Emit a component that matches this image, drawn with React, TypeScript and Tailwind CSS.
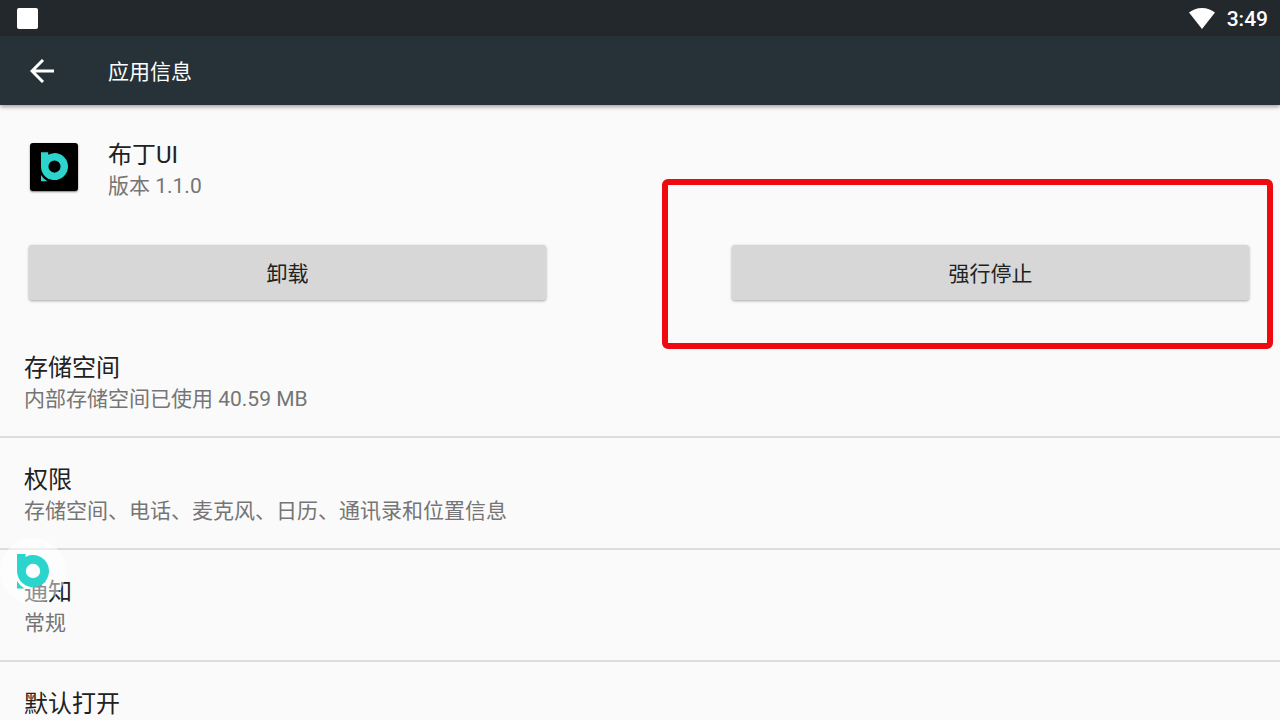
import React from 'react';

interface SettingItem {
    id: number;
    title: string;
    summary?: string;
}

const BrandMark: React.FC<{ className?: string }> = ({ className = '' }) => {
    return (
        <svg viewBox="0 0 32 35" className={className} fill="#2bd4cd" aria-hidden="true">
            <path
                fillRule="evenodd"
                d="M0 0H8.5V2.9A16 16 0 1 1 0 17ZM16 9.8A7.2 7.2 0 1 0 16 24.2A7.2 7.2 0 1 0 16 9.8Z"
            />
            <path d="M0 27Q2.4 31.4 7.5 34.5H0Z" />
        </svg>
    );
};

const StatusBar: React.FC = () => {
    return (
        <div className="flex h-9 items-center justify-between bg-[#23282c] pl-[17px] pr-3 text-white">
            <span className="size-[21px] rounded-[2px] bg-white" />
            <div className="flex items-center gap-3">
                <svg viewBox="0 0 26 21" className="h-[21px] w-[26px]" fill="currentColor" aria-hidden="true">
                    <path d="M13 21 0 4.6C3.6 1.7 8 0 13 0s9.4 1.7 13 4.6Z" />
                </svg>
                <span className="pt-0.5 text-[21px] font-medium leading-6">3:49</span>
            </div>
        </div>
    );
};

const AppBar: React.FC = () => {
    return (
        <header className="relative flex h-[69px] items-center gap-[54px] bg-[#273238] pl-[30px] text-white shadow-[0_2px_4px_rgba(0,0,0,0.35)]">
            <button type="button" aria-label="返回">
                <svg viewBox="0 0 24 24" className="size-6" fill="none" stroke="currentColor" strokeWidth="3">
                    <path d="M24 12H2.5M13 1 2 12l11 11" />
                </svg>
            </button>
            <h1 className="pt-0.5 text-[21px] leading-8">应用信息</h1>
        </header>
    );
};

const ActionButton: React.FC<{ label: string }> = ({ label }) => {
    return (
        <button
            type="button"
            className="block h-[55px] w-full rounded-[3px] bg-[#d7d7d7] pt-0.5 text-[21px] leading-8 text-[#212121] shadow-[0_1px_3px_rgba(0,0,0,0.35)]"
        >
            {label}
        </button>
    );
};

const App: React.FC = () => {
    const items: SettingItem[] = [
        { id: 1, title: '存储空间', summary: '内部存储空间已使用 40.59 MB' },
        { id: 2, title: '权限', summary: '存储空间、电话、麦克风、日历、通讯录和位置信息' },
        { id: 3, title: '通知', summary: '常规' },
        { id: 4, title: '默认打开' },
    ];

    return (
        <div className="relative h-screen overflow-hidden bg-[#fafafa] font-['Roboto','Noto_Sans_CJK_SC',sans-serif] text-[#212121]">
            <StatusBar />
            <AppBar />

            <main>
                {/* App name and version */}
                <section className="flex items-start gap-[30px] px-[30px] pt-[34px]">
                    <div className="mt-1 flex size-12 items-center justify-center rounded-[3px] bg-black shadow-[0_1px_2px_rgba(0,0,0,0.5)]">
                        <BrandMark className="h-[30px] w-[27px]" />
                    </div>
                    <div>
                        <h2 className="text-2xl leading-8">布丁UI</h2>
                        <p className="text-[21px] leading-[30px] text-[#757575]">版本 1.1.0</p>
                    </div>
                </section>

                {/* Actions */}
                <section className="grid grid-cols-2 gap-[186px] pb-[26px] pl-[29px] pr-[31px] pt-11">
                    <ActionButton label="卸载" />
                    <div className="relative">
                        <ActionButton label="强行停止" />
                        <span className="pointer-events-none absolute -bottom-[49px] -left-[70px] -right-6 -top-[66px] rounded-md border-6 border-[#ee0a0e]" />
                    </div>
                </section>

                {/* Settings list */}
                <ul>
                    {items.map((item) => (
                        <li key={item.id} className="h-28 border-b-2 border-[#dcdcdc] px-6 pt-[26px]">
                            <h3 className="text-2xl leading-8">{item.title}</h3>
                            {item.summary && (
                                <p className="text-[21px] leading-[30px] text-[#757575]">{item.summary}</p>
                            )}
                        </li>
                    ))}
                </ul>
            </main>

            {/* Floating assistant bubble */}
            <button
                type="button"
                aria-label="布丁"
                className="absolute left-0 top-[538px] flex size-[66px] items-center justify-center rounded-full bg-white/50"
            >
                <BrandMark className="h-[35px] w-8" />
            </button>
        </div>
    );
};

export default App;
